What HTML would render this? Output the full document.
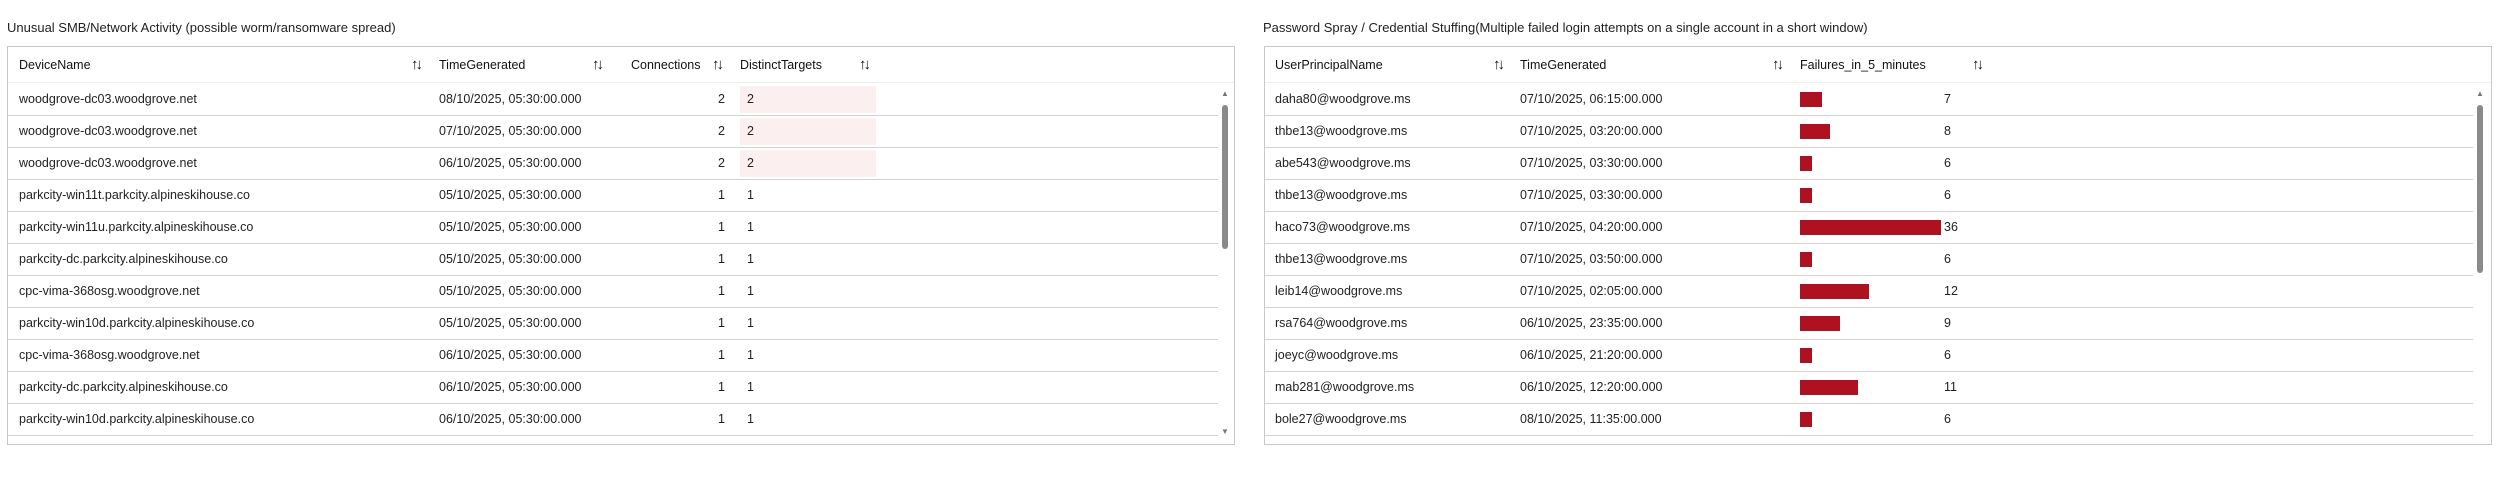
<!DOCTYPE html>
<html><head><meta charset="utf-8"><style>
body{margin:0;width:2507px;height:478px;background:#fff;font-family:"Liberation Sans",sans-serif;color:#222;font-size:12.5px;position:relative;overflow:hidden}
.t{position:absolute;font-size:13px;color:#222}
.panel{position:absolute;top:46px;height:397px;border:1px solid #c8c8c8;background:#fff;overflow:hidden}
.row{position:absolute;left:0;height:32px;border-bottom:1px solid #d2d2d2}
.c{position:absolute;top:0;line-height:32px;white-space:nowrap}
.h .c{line-height:36px;font-weight:normal;color:#111}
.s{position:absolute;font-size:15px;color:#444;letter-spacing:-3px}
.pink{position:absolute;top:3px;height:27px;background:#fbeff0}
.bar{position:absolute;top:9px;height:15px;background:#ae1120}
.sb{position:absolute;width:6px;background:#8a8a8a;border-radius:3px}
.ar{position:absolute;font-size:8px;color:#777}
</style></head><body>
<div class="t" style="left:7px;top:20px">Unusual SMB/Network Activity (possible worm/ransomware spread)</div>
<div class="t" style="left:1263px;top:20px">Password Spray / Credential Stuffing(Multiple failed login attempts on a single account in a short window)</div>

<div class="panel" style="left:7px;width:1226px">
 <div class="row h" style="top:0;height:35px;width:1226px;border-bottom:1px solid #eee">
  <span class="c" style="left:11px">DeviceName</span><span class="c s" style="left:403px">↑↓</span>
  <span class="c" style="left:431px">TimeGenerated</span><span class="c s" style="left:584px">↑↓</span>
  <span class="c" style="left:623px">Connections</span><span class="c s" style="left:704px">↑↓</span>
  <span class="c" style="left:732px">DistinctTargets</span><span class="c s" style="left:851px">↑↓</span>
 </div>
 <div id="L"></div>
 <div class="ar" style="left:1213px;top:42px">▲</div>
 <div class="sb" style="left:1214px;top:58px;height:144px"></div>
 <div class="ar" style="left:1213px;top:380px">▼</div>
</div>

<div class="panel" style="left:1264px;width:1226px">
 <div class="row h" style="top:0;height:35px;width:1226px;border-bottom:1px solid #eee">
  <span class="c" style="left:10px">UserPrincipalName</span><span class="c s" style="left:228px">↑↓</span>
  <span class="c" style="left:255px">TimeGenerated</span><span class="c s" style="left:507px">↑↓</span>
  <span class="c" style="left:535px">Failures_in_5_minutes</span><span class="c s" style="left:707px">↑↓</span>
 </div>
 <div id="R"></div>
 <div class="ar" style="left:1211px;top:42px">▲</div>
 <div class="sb" style="left:1212px;top:58px;height:168px"></div>
</div>

<script>
var L=[["woodgrove-dc03.woodgrove.net","08/10/2025, 05:30:00.000",2,2],["woodgrove-dc03.woodgrove.net","07/10/2025, 05:30:00.000",2,2],["woodgrove-dc03.woodgrove.net","06/10/2025, 05:30:00.000",2,2],["parkcity-win11t.parkcity.alpineskihouse.co","05/10/2025, 05:30:00.000",1,1],["parkcity-win11u.parkcity.alpineskihouse.co","05/10/2025, 05:30:00.000",1,1],["parkcity-dc.parkcity.alpineskihouse.co","05/10/2025, 05:30:00.000",1,1],["cpc-vima-368osg.woodgrove.net","05/10/2025, 05:30:00.000",1,1],["parkcity-win10d.parkcity.alpineskihouse.co","05/10/2025, 05:30:00.000",1,1],["cpc-vima-368osg.woodgrove.net","06/10/2025, 05:30:00.000",1,1],["parkcity-dc.parkcity.alpineskihouse.co","06/10/2025, 05:30:00.000",1,1],["parkcity-win10d.parkcity.alpineskihouse.co","06/10/2025, 05:30:00.000",1,1],["","","",""]];
var h="";L.forEach(function(r,i){h+='<div class="row" style="top:'+(36+i*32)+'px;width:1210px">'+(r[3]==2?'<div class="pink" style="left:732px;width:136px"></div>':'')+'<span class="c" style="left:11px">'+r[0]+'</span><span class="c" style="left:431px">'+r[1]+'</span><span class="c" style="right:493px">'+r[2]+'</span><span class="c" style="left:739px">'+r[3]+'</span></div>';});
document.getElementById("L").innerHTML=h;
var R=[["daha80@woodgrove.ms","07/10/2025, 06:15:00.000",7,22],["thbe13@woodgrove.ms","07/10/2025, 03:20:00.000",8,30],["abe543@woodgrove.ms","07/10/2025, 03:30:00.000",6,12],["thbe13@woodgrove.ms","07/10/2025, 03:30:00.000",6,12],["haco73@woodgrove.ms","07/10/2025, 04:20:00.000",36,141],["thbe13@woodgrove.ms","07/10/2025, 03:50:00.000",6,12],["leib14@woodgrove.ms","07/10/2025, 02:05:00.000",12,69],["rsa764@woodgrove.ms","06/10/2025, 23:35:00.000",9,40],["joeyc@woodgrove.ms","06/10/2025, 21:20:00.000",6,12],["mab281@woodgrove.ms","06/10/2025, 12:20:00.000",11,58],["bole27@woodgrove.ms","08/10/2025, 11:35:00.000",6,12],["","","",48]];
h="";R.forEach(function(r,i){h+='<div class="row" style="top:'+(36+i*32)+'px;width:1208px"><span class="c" style="left:10px">'+r[0]+'</span><span class="c" style="left:255px">'+r[1]+'</span><div class="bar" style="left:535px;width:'+r[3]+'px"></div><span class="c" style="left:679px">'+r[2]+'</span></div>';});
document.getElementById("R").innerHTML=h;
</script>
</body></html>
